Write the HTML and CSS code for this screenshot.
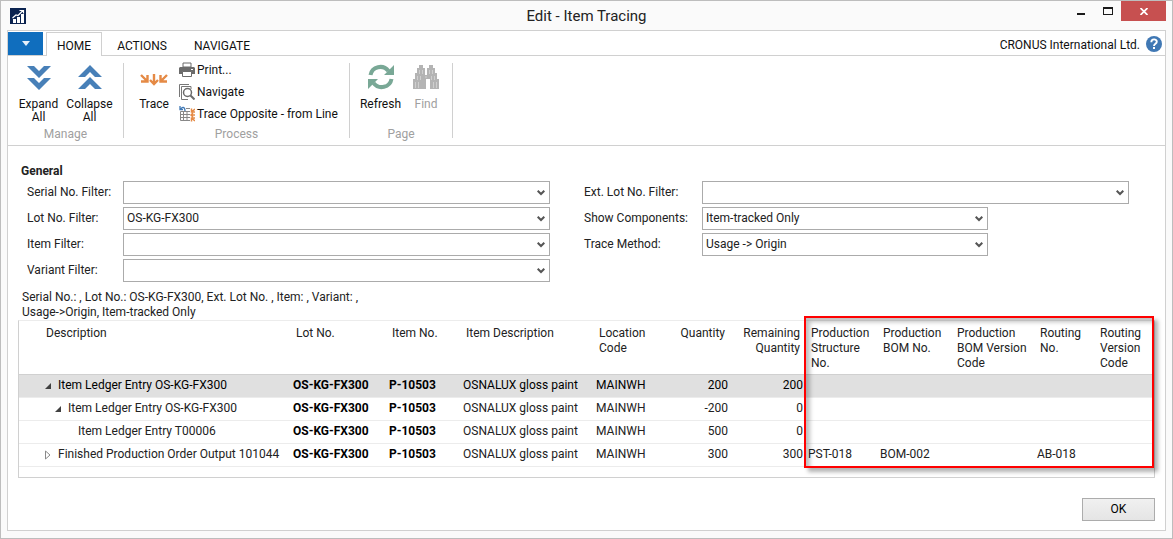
FILE: index.html
```html
<!DOCTYPE html>
<html lang="en">
<head>
<meta charset="utf-8">
<title>Edit - Item Tracing</title>
<link rel="stylesheet" href="styles.css">
</head>
<body>
<div class="window">
  <header class="titlebar">
    <svg class="app-icon" width="16" height="16" viewBox="0 0 16 16" aria-hidden="true">
      <rect width="16" height="16" fill="#0b2350"/>
      <path d="M3 15v-4h3v4zM7 15V9h3v6zM11 15V6h3v9z" fill="#fff"/>
      <path d="M2.500 10 6 7l2 .5 5-5M9.500 2.500h4v3" fill="none" stroke="#fff" stroke-width="1.200"/>
    </svg>
    <h1 class="title">Edit - Item Tracing</h1>
    <div class="controls">
      <button class="control minimize" type="button" aria-label="Minimize"><svg width="10" height="12" viewBox="0 0 10 12"><path d="M1 10h8v2H1z" fill="#1a1a1a"/></svg></button>
      <button class="control" type="button" aria-label="Maximize"><svg width="10" height="8" viewBox="0 0 10 8"><path d="M0 0h10v8H0zM1 2v5h8V2z" fill="#1a1a1a" fill-rule="evenodd"/></svg></button>
      <button class="control close" type="button" aria-label="Close"><svg width="8" height="7" viewBox="0 0 8 7"><path d="M.5 0l7 7M7.500 0l-7 7" stroke="#fff" stroke-width="1.700"/></svg></button>
    </div>
  </header>

  <div class="frame">
    <nav class="tabs">
      <button class="app-menu" type="button" aria-label="Application menu"><svg width="8" height="5" viewBox="0 0 8 5"><path d="M0 0h8L4 5z" fill="#e6f0fa"/></svg></button>
      <a class="tab active" href="#home">HOME</a>
      <a class="tab" href="#actions">ACTIONS</a>
      <a class="tab" href="#navigate">NAVIGATE</a>
      <span class="company">CRONUS International Ltd.</span>
      <button class="help" type="button" aria-label="Help"><svg width="16" height="16" viewBox="0 0 16 16"><circle cx="8" cy="8" r="8" fill="#4078b4"/><path d="M5.300 6.200c0-3.700 5.500-3.700 5.500-.5C10.800 7.700 8 7.900 8 10" fill="none" stroke="#fff" stroke-width="1.900"/><rect x="7" y="11" width="2" height="2" fill="#fff"/></svg></button>
    </nav>

    <div class="ribbon">
      <section class="group manage">
        <div class="group-items">
          <button class="big" type="button"><svg width="26" height="26" viewBox="0 0 26 26"><path d="M1 2h7l5 5 5-5h7L13 14zM1 14h7l5 5 5-5h7L13 26z" fill="#4880b8"/></svg><span>Expand<br>All</span></button>
          <button class="big" type="button"><svg width="26" height="26" viewBox="0 0 26 26"><path d="M1 13h7l5-5 5 5h7L13 1zM1 25h7l5-5 5 5h7L13 13z" fill="#4880b8"/></svg><span>Collapse<br>All</span></button>
        </div>
        <h2 class="group-name">Manage</h2>
      </section>
      <section class="group process">
        <div class="group-items">
          <button class="big" type="button"><svg width="28" height="26" viewBox="0 0 28 26"><path d="M1 11l5.500 5.500M7.500 11v6.500H1M14 10v9.500M10 16l4 4 4-4M27 11l-5.500 5.500M20.500 11v6.500H27" fill="none" stroke="#e58a45" stroke-width="2.400"/></svg><span>Trace</span></button>
          <div class="small-list">
            <button class="small" type="button"><svg width="16" height="16" viewBox="0 0 16 16"><path d="M4 1h8v4H4z" fill="#fff" stroke="#6b6b6b"/><path d="M1 5h14l1 1v6H0V6z" fill="#6b6b6b"/><path d="M12 7h2v1h-2z" fill="#fff"/><path d="M3.500 9.500h9v5h-9z" fill="#fff" stroke="#6b6b6b"/></svg><span>Print...</span></button>
            <button class="small" type="button"><svg width="16" height="16" viewBox="0 0 16 16"><path d="M.5 13V.5H10M2.500 15.500v-13H12V5M2.500 15.500H9" fill="none" stroke="#777"/><circle cx="8.500" cy="8.500" r="4" fill="#fff" stroke="#6b6b6b" stroke-width="1.500"/><path d="M11.500 11.500l4 4" stroke="#6b6b6b" stroke-width="2"/></svg><span>Navigate</span></button>
            <button class="small" type="button"><svg width="16" height="16" viewBox="0 0 16 16"><path d="M1.500 5.500v9h10v-12H7M1.500 8.500h10M1.500 11.500h10M4.500 6v8.500M8 5v9.500M1.500 5.500h10" fill="none" stroke="#888"/><path d="M1.500 3.500C3 0 6 1 6 5M1 0v3.500h3" fill="none" stroke="#3f78b5" stroke-width="1.300"/><path d="M11 2h5v13h-5z" fill="#fff"/><path d="M16 3l-3 2.500M12.500 2.500v3.500H16M16 9h-4M14 7l-2 2 2 2M16 15l-3-2.500M12.500 15.500V12H16" fill="none" stroke="#e58a45" stroke-width="1.500"/></svg><span>Trace Opposite - from Line</span></button>
          </div>
        </div>
        <h2 class="group-name">Process</h2>
      </section>
      <section class="group page">
        <div class="group-items">
          <button class="big" type="button"><svg width="26" height="26" viewBox="0 0 26 26"><path d="M2.500 11C4 2.500 15 0 20.500 7M23.500 15C22 23.500 11 26 5.500 19" fill="none" stroke="#79a896" stroke-width="4"/><path d="M26 1v10H16zM0 25V15h10z" fill="#79a896"/></svg><span>Refresh</span></button>
          <button class="big" type="button" disabled><svg width="26" height="26" viewBox="0 0 26 26"><path d="M6 1h4v3h2v7h2V4h2V1h4v3h2v5h2v6h2v10h-9V15h-4v10H0V15h2V9h2V4h2z" fill="#b4b4b4"/><path d="M6.500 6v4M9.500 6v4M4.500 12v4M7.500 12v4M2.500 18v6M5.500 18v6M16.500 6v4M19.500 6v4M18.500 12v4M21.500 12v4M20.500 18v6M23.500 18v6M12 13h2" stroke="#cfcfcf" fill="none"/></svg><span>Find</span></button>
        </div>
        <h2 class="group-name">Page</h2>
      </section>
    </div>

    <main class="content">
      <h2 class="section-title">General</h2>
      <form class="filters">
        <div class="column left">
          <label for="serial">Serial No. Filter:</label><select id="serial"><option></option></select>
          <label for="lot">Lot No. Filter:</label><select id="lot"><option>OS-KG-FX300</option></select>
          <label for="item">Item Filter:</label><select id="item"><option></option></select>
          <label for="variant">Variant Filter:</label><select id="variant"><option></option></select>
        </div>
        <div class="column right">
          <label for="ext">Ext. Lot No. Filter:</label><select id="ext"><option></option></select>
          <label for="components">Show Components:</label><select id="components" class="short"><option>Item-tracked Only</option></select>
          <label for="method">Trace Method:</label><select id="method" class="short"><option>Usage -&gt; Origin</option></select>
        </div>
      </form>
      <p class="summary">Serial No.: , Lot No.: OS-KG-FX300, Ext. Lot No. , Item: , Variant: ,<br>Usage-&gt;Origin, Item-tracked Only</p>

      <div class="grid">
        <table>
          <colgroup><col class="c-desc"><col class="c-lot"><col class="c-item"><col class="c-idesc"><col class="c-loc"><col class="c-qty"><col class="c-rem"><col class="c-struct"><col class="c-bom"><col class="c-bomv"><col class="c-rout"><col class="c-routv"></colgroup>
          <thead>
            <tr><th class="desc">Description</th><th>Lot No.</th><th>Item No.</th><th>Item Description</th><th>Location<br>Code</th><th class="num">Quantity</th><th class="num">Remaining<br>Quantity</th><th>Production<br>Structure<br>No.</th><th>Production<br>BOM No.</th><th>Production<br>BOM Version<br>Code</th><th>Routing<br>No.</th><th>Routing<br>Version<br>Code</th></tr>
          </thead>
          <tbody>
            <tr class="selected"><td><div class="node"><svg width="6" height="6" viewBox="0 0 6 6"><path d="M6 0v6H0z" fill="#404040"/></svg>Item Ledger Entry OS-KG-FX300</div></td><td class="key">OS-KG-FX300</td><td class="key">P-10503</td><td>OSNALUX gloss paint</td><td>MAINWH</td><td class="num">200</td><td class="num">200</td><td></td><td></td><td></td><td></td><td></td></tr>
            <tr><td><div class="node level-2"><svg width="6" height="6" viewBox="0 0 6 6"><path d="M6 0v6H0z" fill="#404040"/></svg>Item Ledger Entry OS-KG-FX300</div></td><td class="key">OS-KG-FX300</td><td class="key">P-10503</td><td>OSNALUX gloss paint</td><td>MAINWH</td><td class="num">-200</td><td class="num">0</td><td></td><td></td><td></td><td></td><td></td></tr>
            <tr><td><div class="node leaf">Item Ledger Entry T00006</div></td><td class="key">OS-KG-FX300</td><td class="key">P-10503</td><td>OSNALUX gloss paint</td><td>MAINWH</td><td class="num">500</td><td class="num">0</td><td></td><td></td><td></td><td></td><td></td></tr>
            <tr><td><div class="node"><svg width="6" height="10" viewBox="0 0 6 10"><path d="M.5 1v8L5 5z" fill="#fff" stroke="#8a8a8a"/></svg>Finished Production Order Output 101044</div></td><td class="key">OS-KG-FX300</td><td class="key">P-10503</td><td>OSNALUX gloss paint</td><td>MAINWH</td><td class="num">300</td><td class="num">300</td><td>PST-018</td><td>BOM-002</td><td></td><td>AB-018</td><td></td></tr>
          </tbody>
        </table>
        <div class="highlight"></div>
      </div>
      <footer class="actions"><button class="ok" type="button">OK</button></footer>
    </main>
  </div>
</div>
</body>
</html>
```
FILE: styles.css
```css
* { box-sizing: border-box; }
body {
  margin: 0;
  background: #fafafa;
  color: #222;
  font: 12px/15px Roboto, "Noto Sans", sans-serif;
}
h1, h2, p { margin: 0; font-weight: 400; }
button { border: 0; background: none; padding: 0; margin: 0; font: inherit; color: inherit; }
svg { display: block; flex: none; }
a { color: inherit; text-decoration: none; }

.window {
  min-height: 100vh;
  display: flex;
  flex-direction: column;
  padding: 0 6px 7px;
  border: 1px solid #bdbdbd;
}
.titlebar { display: grid; grid-template-columns: 1fr auto 1fr; height: 29px; align-items: center; }
.app-icon { margin-left: 3px; }
.title { font-size: 15px; line-height: 20px; color: #222; }
.controls { display: flex; justify-content: flex-end; align-self: start; }
.control { width: 27px; height: 20px; display: flex; align-items: center; justify-content: center; }
.control.minimize { align-items: end; padding-bottom: 6px; }
.control.close { width: 45px; background: #c75050; }

.frame { flex: 1; display: flex; flex-direction: column; border: 1px solid #d0d0d0; background: #fff; }
.tabs { display: flex; align-items: stretch; height: 25px; border-bottom: 1px solid #d0d0d0; color: #111; }
.app-menu { width: 35px; height: 23px; margin: 1px 3px 0 0; background: #106ebe; display: flex; align-items: center; justify-content: center; }
.tab { padding: 5px 11px 0 14px; line-height: 18px; border: 1px solid transparent; border-bottom: 0; }
.tab.active { padding: 4px 10px 0; margin: 1px 0 -1px; background: #fff; border-color: #d0d0d0; }
.company { margin-left: auto; line-height: 28px; }
.help { margin: 5px 3px 0 6px; align-self: start; }

.ribbon { display: flex; height: 90px; padding: 7px 0; border-bottom: 1px solid #d0d0d0; color: #111; }
.group { display: flex; flex-direction: column; justify-content: space-between; border-right: 1px solid #d0d0d0; }
.group-items { display: flex; }
.group-name { margin-bottom: -4px; text-align: center; font-size: 12px; line-height: 15px; color: #a0a0a0; }
.manage { width: 116px; }
.manage .group-items { padding-left: 5px; }
.process { width: 226px; }
.process .group-items { padding-left: 12px; }
.page { width: 103px; }
.page .group-items { padding-left: 5px; }
.big { display: flex; flex-direction: column; align-items: center; gap: 8px; width: 51px; padding-top: 1px; line-height: 13px; }
.process .big { width: 36px; }
.big:disabled { color: #a0a0a0; }
.page .big:disabled { width: 40px; }
.small-list { display: flex; flex-direction: column; margin: -4px 0 0 7px; }
.small { display: flex; align-items: center; gap: 2px; height: 22px; white-space: nowrap; }

.content { flex: 1; display: flex; flex-direction: column; padding: 16px 10px 9px 10px; }
.section-title { font-size: 12px; font-weight: 700; line-height: 18px; padding-left: 3px; }
.filters { display: grid; grid-template-columns: 523fr 545fr; gap: 34px; padding: 1px 26px 0 9px; }
.column { display: grid; grid-auto-rows: 23px; row-gap: 3px; align-content: start; }
.left { grid-template-columns: 96px 1fr; }
.right { grid-template-columns: 118px 1fr; }
.column label { line-height: 22px; white-space: nowrap; }
select {
  appearance: none;
  width: 100%;
  height: 23px;
  border: 1px solid #ababab;
  border-radius: 0;
  padding: 0 20px 0 3px;
  color: #222;
  font: inherit;
  background: #fff url("data:image/svg+xml,%3Csvg xmlns='http://www.w3.org/2000/svg' width='8' height='6'%3E%3Cpath d='M.7.700 4 4 7.300.700' fill='none' stroke='%23555' stroke-width='2'/%3E%3C/svg%3E") no-repeat right 4px center;
}
select.short { width: 67%; }
.summary { padding: 8px 0 0 4px; }

.grid { position: relative; border: 1px solid #d0d0d0; border-top-color: #ececec; padding-bottom: 10px; }
table { width: 100%; table-layout: fixed; border-collapse: collapse; }
th { text-align: left; vertical-align: top; font-weight: 400; padding: 5px 0 2px 5px; height: 53px; white-space: nowrap; border-bottom: 1px solid #d0d0d0; }
th.desc { padding-left: 27px; }
th.num { padding-right: 6px; text-align: right; }
td { height: 23px; padding: 0 0 0 2px; white-space: nowrap; border-bottom: 1px solid #ececec; }
td.num { text-align: right; padding-right: 3px; }
.key { font-weight: 700; color: #000; }
.selected { background: #e0e0e0; color: #000; }
.node { display: flex; align-items: center; gap: 7px; padding-left: 24px; }
.level-2 { padding-left: 34px; }
.leaf { padding-left: 57px; }
.c-desc { width: 272px; }
.c-lot { width: 96px; }
.c-item { width: 74px; }
.c-idesc { width: 133px; }
.c-loc { width: 72px; }
.c-qty { width: 65px; }
.c-rem { width: 75px; }
.c-struct { width: 72px; }
.c-bom { width: 74px; }
.c-bomv { width: 83px; }
.c-rout { width: 60px; }
.highlight { position: absolute; top: -5px; right: 0; bottom: 9px; width: 350px; border: 2px solid #f00; box-shadow: 4px 4px 4px rgba(0,0,0,.3), inset 4px 4px 4px rgba(0,0,0,.25); pointer-events: none; }
.actions { display: flex; justify-content: flex-end; margin-top: auto; }
.ok { width: 73px; height: 23px; border: 1px solid #acacac; background: linear-gradient(#f0f0f0, #e5e5e5); color: #000; }
```
